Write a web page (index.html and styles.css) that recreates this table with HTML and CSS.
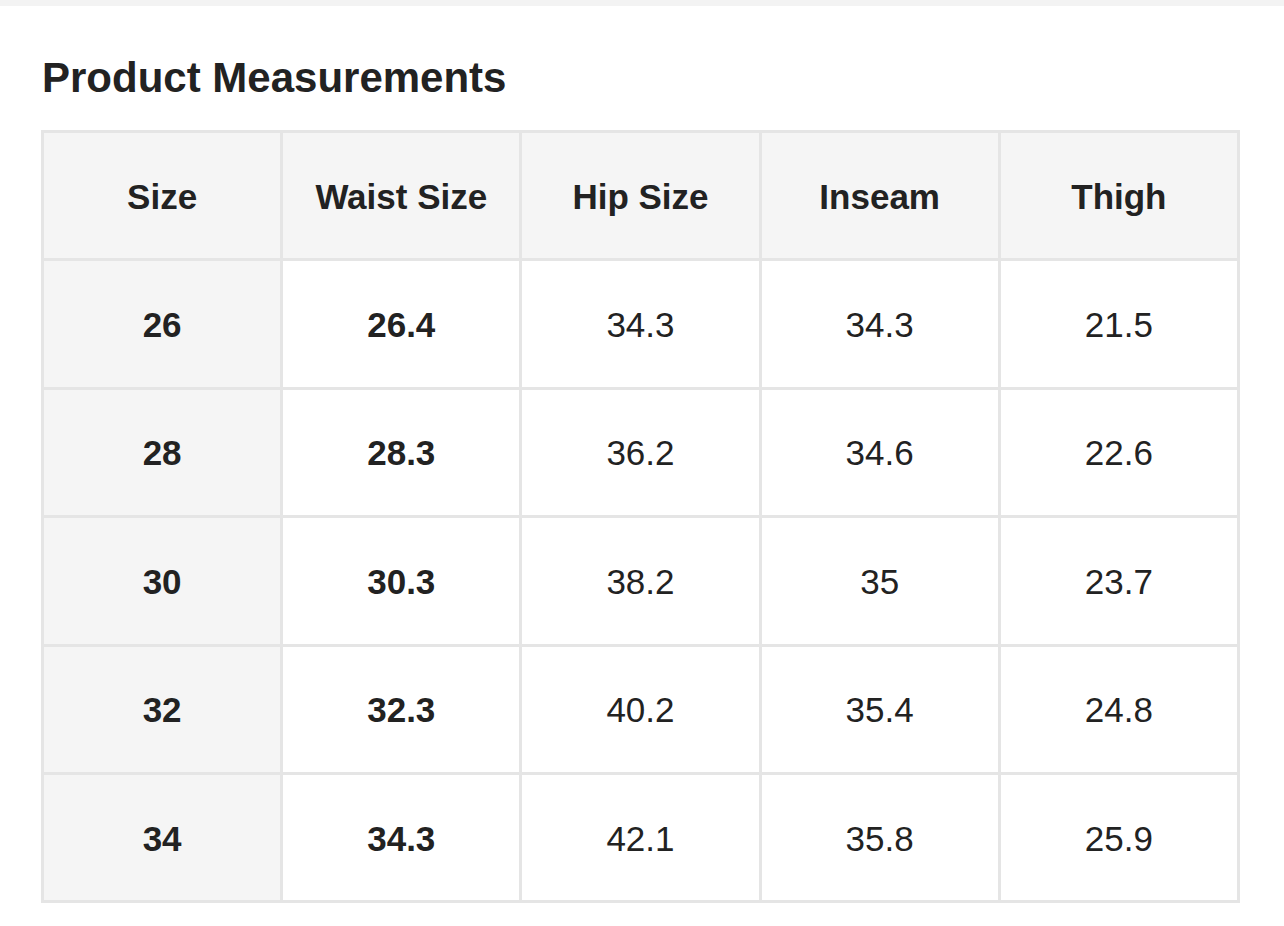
FILE: index.html
```html
<!DOCTYPE html>
<html lang="en">
<head>
<meta charset="utf-8">
<title>Product Measurements</title>
<link rel="stylesheet" href="styles.css">
</head>
<body>
<div class="topbar"></div>
<main class="content">
  <h1 class="title">Product Measurements</h1>
  <table class="sizes">
    <thead>
      <tr><th>Size</th><th>Waist Size</th><th>Hip Size</th><th>Inseam</th><th>Thigh</th></tr>
    </thead>
    <tbody>
      <tr><th>26</th><td class="strong">26.4</td><td>34.3</td><td>34.3</td><td>21.5</td></tr>
      <tr><th>28</th><td class="strong">28.3</td><td>36.2</td><td>34.6</td><td>22.6</td></tr>
      <tr><th>30</th><td class="strong">30.3</td><td>38.2</td><td>35</td><td>23.7</td></tr>
      <tr><th>32</th><td class="strong">32.3</td><td>40.2</td><td>35.4</td><td>24.8</td></tr>
      <tr><th>34</th><td class="strong">34.3</td><td>42.1</td><td>35.8</td><td>25.9</td></tr>
    </tbody>
  </table>
</main>
</body>
</html>
```
FILE: styles.css
```css
html, body {
  margin: 0;
  padding: 0;
  background: #ffffff;
}
body {
  font-family: "Liberation Sans", Arial, Helvetica, sans-serif;
  color: #222222;
}
.topbar {
  height: 6px;
  background: #f3f3f3;
}
.content {
  padding: 48px 44px 0 41px;
}
.title {
  margin: 0 0 28px 1px;
  font-size: 42px;
  line-height: 48px;
  font-weight: 700;
  color: #222222;
}
.sizes {
  border-collapse: collapse;
  table-layout: fixed;
  width: 1199px;
  font-size: 35px;
}
.sizes th,
.sizes td {
  border: 3px solid #e5e5e5;
  height: 123.4px;
  padding: 2px 0 0;
  text-align: center;
  vertical-align: middle;
  font-weight: 400;
  color: #222222;
}
.sizes thead th {
  background: #f5f5f5;
  font-weight: 700;
}
.sizes tbody th {
  background: #f5f5f5;
  font-weight: 700;
}
.sizes td.strong {
  font-weight: 700;
}
```
